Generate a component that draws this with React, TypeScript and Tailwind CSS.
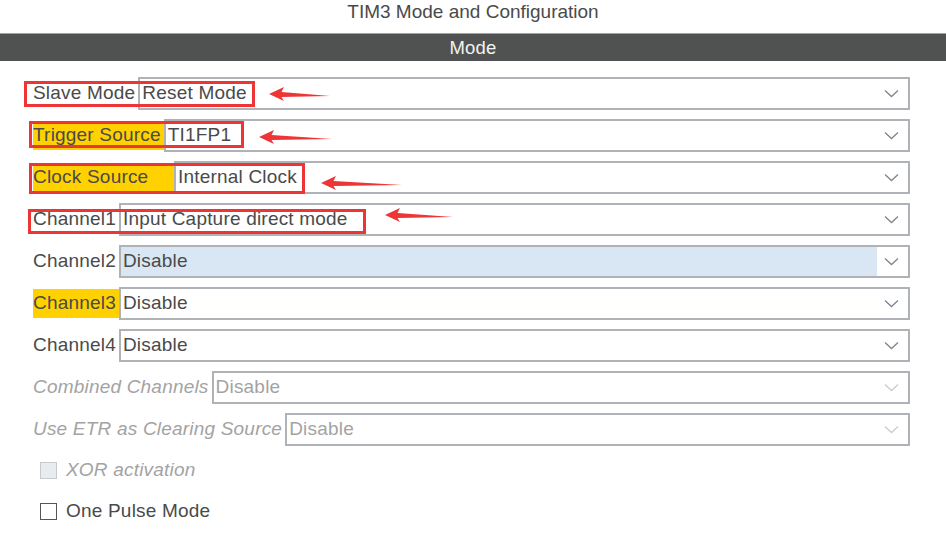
import React from 'react';

type Row = {
    label: string;
    value: string;
    labelW?: string;
    highlight?: boolean;
    disabled?: boolean;
    selected?: boolean;
};

const rows: Row[] = [
    { label: 'Slave Mode', value: 'Reset Mode' },
    { label: 'Trigger Source', value: 'TI1FP1', highlight: true },
    { label: 'Clock Source', value: 'Internal Clock', highlight: true, labelW: 'w-[141px]' },
    { label: 'Channel1', value: 'Input Capture direct mode' },
    { label: 'Channel2', value: 'Disable', selected: true },
    { label: 'Channel3', value: 'Disable', highlight: true },
    { label: 'Channel4', value: 'Disable' },
    { label: 'Combined Channels', value: 'Disable', disabled: true },
    { label: 'Use ETR as Clearing Source', value: 'Disable', disabled: true },
];

const Chevron = ({ disabled }: { disabled?: boolean }) => (
    <svg width="15" height="9" viewBox="0 0 15 9" fill="none">
        <path d="M1 1.5 L7.5 7.5 L14 1.5" stroke={disabled ? '#c9ccd0' : '#7f858b'} strokeWidth="1.3" />
    </svg>
);

// red annotation arrow, tip on the left
const Arrow = ({ x, y, len }: { x: number; y: number; len: number }) => (
    <svg className="absolute" style={{ left: x, top: y - 8 }} width={len} height="16" viewBox={`0 0 ${len} 16`}>
        <polygon points={`0,8 15,1 12.5,6 ${len},10 12.5,11 15,15`} fill="#ee3535" />
    </svg>
);

const SelectRow = ({ row }: { row: Row }) => (
    <div className="flex h-[33px] items-center">
        <div
            className={`flex h-[29px] items-center pr-[3px] whitespace-nowrap ${row.labelW ?? ''} ${row.highlight ? 'bg-[#ffd100]' : ''} ${row.disabled ? 'italic text-[#a3a3a3]' : 'text-[#4a4a4a]'}`}
        >
            {row.label}
        </div>
        <div className="flex h-[33px] flex-1 items-stretch border-2 border-[#afb3b7] bg-white">
            <div className={`flex flex-1 items-center pl-[2px] ${row.selected ? 'bg-[#d9e7f4]' : ''} ${row.disabled ? 'text-[#a3a3a3]' : 'text-[#4a4a4a]'}`}>
                {row.value}
            </div>
            <div className="flex w-[31px] items-center justify-center pr-[2px]">
                <Chevron disabled={row.disabled} />
            </div>
        </div>
    </div>
);

const Checkbox = ({ label, disabled }: { label: string; disabled?: boolean }) => (
    <div className="flex h-[41px] items-center gap-[9px] pl-[40px]">
        <div className={`h-[17px] w-[17px] border ${disabled ? 'border-[#c5cacf] bg-[#e9ecef]' : 'border-[#555] bg-white'}`} />
        <span className={disabled ? 'italic text-[#a3a3a3]' : 'text-[#4a4a4a]'}>{label}</span>
    </div>
);

const App = () => {
    return (
        <div className="relative h-[533px] w-[946px] overflow-hidden bg-white text-[19px] tracking-[0.2px]" style={{ fontFamily: '"Liberation Sans", Arial, sans-serif' }}>
            <div className="flex h-[33px] justify-center pt-[1px] text-[19px] leading-[22px] tracking-normal text-[#4a4a4a]">
                TIM3 Mode and Configuration
            </div>
            <div className="flex h-[28px] items-center justify-center border-t border-[#9fa3a6] bg-[#505251] text-[18.5px] text-[#f2f2f2]">
                Mode
            </div>

            <div className="flex flex-col gap-[9px] pt-[16px] pl-[33px] pr-[36px]">
                {rows.map((r) => (
                    <SelectRow key={r.label} row={r} />
                ))}
            </div>

            <div className="flex flex-col pt-[4px]">
                <Checkbox label="XOR activation" disabled />
                <Checkbox label="One Pulse Mode" />
            </div>

            {/* annotations */}
            <div className="absolute left-[24px] top-[81px] h-[26px] w-[231px] border-[3px] border-[#ee3535]" />
            <div className="absolute left-[29px] top-[121px] h-[27px] w-[215px] border-[3px] border-[#ee3535]" />
            <div className="absolute left-[29px] top-[163px] h-[31px] w-[276px] border-[3px] border-[#ee3535]" />
            <div className="absolute left-[28px] top-[209px] h-[25px] w-[338px] border-[3px] border-[#ee3535]" />
            <Arrow x={269} y={94} len={61} />
            <Arrow x={259} y={137} len={73} />
            <Arrow x={321} y={183} len={81} />
            <Arrow x={385} y={215} len={68} />
        </div>
    );
};

export default App;
